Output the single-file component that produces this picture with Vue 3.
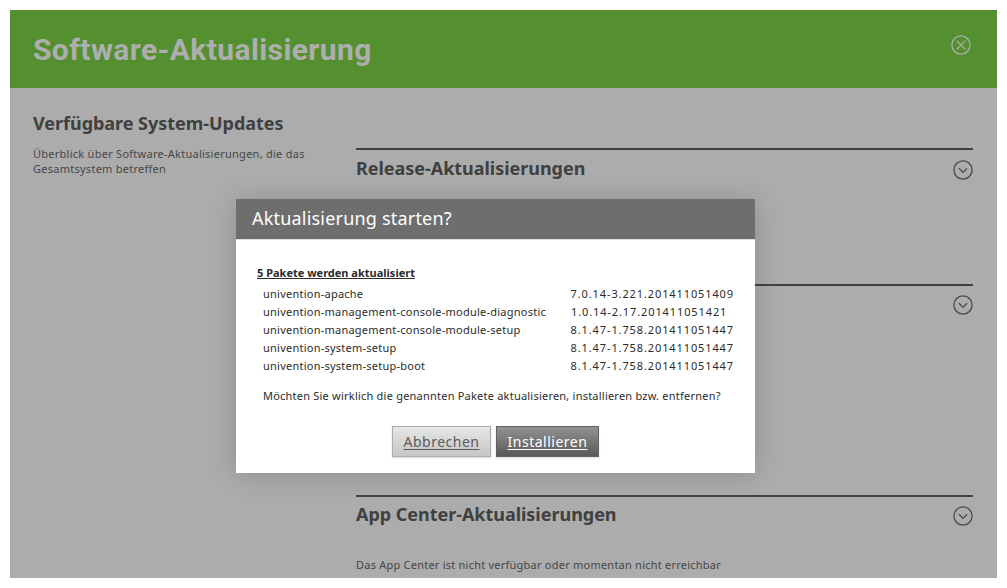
<script setup>
const packages = [
  { name: 'univention-apache', version: '7.0.14-3.221.201411051409', key: 'apache' },
  { name: 'univention-management-console-module-diagnostic', version: '1.0.14-2.17.201411051421', key: 'diagnostic' },
  { name: 'univention-management-console-module-setup', version: '8.1.47-1.758.201411051447', key: 'module' },
  { name: 'univention-system-setup', version: '8.1.47-1.758.201411051447', key: 'setup' },
  { name: 'univention-system-setup-boot', version: '8.1.47-1.758.201411051447', key: 'boot' },
]
const sections = [
  { title: 'Release-Aktualisierungen', key: 'release' },
  { title: '', key: 'package' },
  { title: 'App Center-Aktualisierungen', key: 'app', note: 'Das App Center ist nicht verfügbar oder momentan nicht erreichbar' },
]
</script>

<template>
  <div class="page">
    <header class="top">
      <h1>Software-Aktualisierung</h1>
      <svg class="close" width="20" height="20" viewBox="0 0 20 20">
        <circle cx="10" cy="10" r="9.1" />
        <path d="M5.6 5.6L14.4 14.4M14.4 5.6L5.6 14.4" />
      </svg>
    </header>
    <main class="content">
      <aside class="side">
        <h2>Verfügbare System-Updates</h2>
        <p>Überblick über Software-Aktualisierungen, die das<br>Gesamtsystem betreffen</p>
      </aside>
      <div class="sections">
        <section v-for="s in sections" :key="s.key" :class="s.key">
          <div class="bar">
            <h2>{{ s.title }}</h2>
            <svg width="20" height="20" viewBox="0 0 20 20">
              <circle cx="10" cy="10" r="9.1" />
              <path d="M6 8.3L10 12.4L14 8.3" />
            </svg>
          </div>
          <p v-if="s.note">{{ s.note }}</p>
        </section>
      </div>
    </main>
    <div class="dialog">
      <div class="dialog-title">Aktualisierung starten?</div>
      <div class="dialog-body">
        <h3>5 Pakete werden aktualisiert</h3>
        <div v-for="p in packages" :key="p.key" class="row">
          <div class="name">{{ p.name }}</div>
          <div class="version">{{ p.version }}</div>
        </div>
        <p class="question">Möchten Sie wirklich die genannten Pakete aktualisieren, installieren bzw. entfernen?</p>
        <div class="buttons">
          <button class="cancel">Abbrechen</button>
          <button class="install">Installieren</button>
        </div>
      </div>
    </div>
  </div>
</template>

<style>
body { background: #fff; }
</style>

<style scoped>
.page {
  position: relative;
  box-sizing: border-box;
  width: 1007px;
  height: 588px;
  padding: 10px;
  overflow: hidden;
  font-family: "Noto Sans", sans-serif;
  font-size: 11px;
  color: #464646;
}
h1, h2, h3, p { margin: 0; white-space: nowrap; }
.top {
  box-sizing: border-box;
  height: 78px;
  padding: 25px 26px 0 23px;
  display: flex;
  justify-content: space-between;
  background: #559030;
  color: #aeaeae;
}
h1 { font-family: Roboto, sans-serif; font-size: 30px; line-height: 30px; font-weight: 700; letter-spacing: 0.4px; }
svg { display: block; fill: none; stroke: #464646; stroke-width: 1.25; flex: none; }
.close { stroke: #aeaeae; }
.content { display: flex; height: 490px; background: #acacac; overflow: hidden; }
.side { box-sizing: border-box; width: 346px; padding: 23px 0 0 23px; }
h2 { font-size: 18px; line-height: 24px; font-weight: 700; letter-spacing: -0.03px; color: #404040; }
.side p { margin-top: 11px; line-height: 15px; letter-spacing: 0.26px; }
.sections { width: 617px; padding-top: 60px; }
section { border-top: 2px solid #404240; box-sizing: border-box; }
section.release { height: 136px; }
section.package { height: 211px; }
.bar { display: flex; justify-content: space-between; padding-top: 6px; }
.bar svg { margin-top: 4px; }
.package .bar svg { margin-top: 3px; }
.app .bar { padding-top: 5px; }
section p { margin-top: 31px; line-height: 15px; letter-spacing: 0.23px; }
.dialog {
  position: absolute;
  left: 236px;
  top: 199px;
  width: 519px;
  height: 274px;
  background: #fff;
  color: #2b2b2b;
  box-shadow: 0 2px 24px rgba(0, 0, 0, 0.18);
}
.dialog-title {
  box-sizing: border-box;
  height: 41px;
  padding-left: 16px;
  line-height: 38px;
  font-size: 18px;
  letter-spacing: 0.2px;
  color: #fff;
  background: #6e6e6e;
  border-bottom: 1px solid #dedede;
}
.dialog-body { padding: 25px 21px 0; }
h3 {
  height: 20px;
  font-size: 11px;
  line-height: 16px;
  font-weight: 700;
  text-decoration: underline;
}
.row { display: flex; height: 18px; line-height: 18px; padding-left: 6px; }
.name { width: 308px; letter-spacing: 0.24px; white-space: nowrap; }
.version { letter-spacing: 0.89px; white-space: nowrap; }
.question { margin: 13px 0 0 6px; line-height: 16px; letter-spacing: 0.22px; }
.buttons { display: flex; justify-content: center; gap: 5px; margin-top: 22px; }
button {
  box-sizing: border-box;
  height: 31px;
  padding: 0;
  border: 1px solid #ababab;
  font: 14px/29px "Noto Sans", sans-serif;
  letter-spacing: 0.5px;
  text-decoration: underline;
  text-underline-offset: 2px;
  text-decoration-thickness: 1px;
  box-shadow: 0 1px 2px rgba(0, 0, 0, 0.15);
}
.cancel { width: 99px; color: #5c5c5c; background: linear-gradient(#e6e6e6, #c6c6c6); }
.install { width: 103px; color: #fff; border-color: #626262; background: linear-gradient(#929292, #595959); }
</style>
